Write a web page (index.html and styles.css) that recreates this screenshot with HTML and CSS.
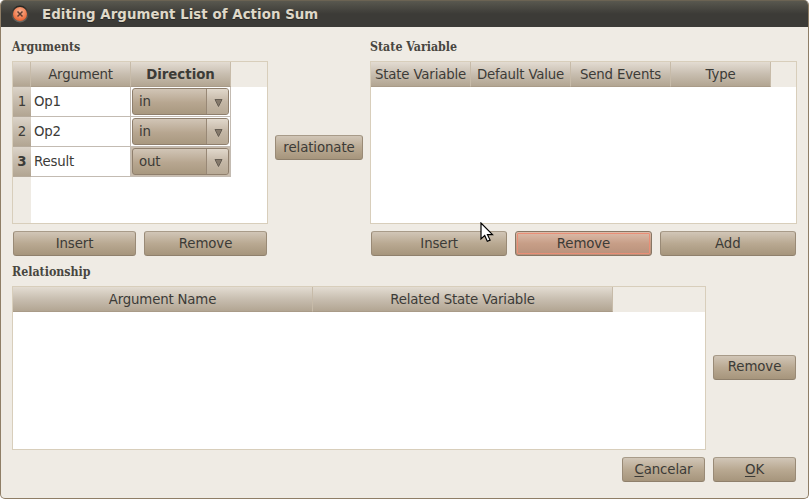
FILE: index.html
```html
<!DOCTYPE html>
<html lang="en">
<head>
<meta charset="utf-8">
<title>Editing Argument List of Action Sum</title>
<link rel="stylesheet" href="styles.css">
</head>
<body>
<div class="window">
  <header class="titlebar">
    <svg class="close" width="18" height="18" viewBox="0 0 18 18">
      <defs>
        <linearGradient id="ring" x1="0" y1="0" x2="0" y2="1"><stop offset="0" stop-color="#24231f"/><stop offset="1" stop-color="#6d6b64"/></linearGradient>
        <radialGradient id="orb" cx=".5" cy=".35" r=".65"><stop offset="0" stop-color="#f8b294"/><stop offset=".55" stop-color="#f28a60"/><stop offset="1" stop-color="#e8602e"/></radialGradient>
      </defs>
      <circle cx="9" cy="9" r="8.5" fill="url(#ring)"/>
      <circle cx="9" cy="9" r="7" fill="url(#orb)"/>
      <path d="M6.5 6.5l5 5M11.5 6.5l-5 5" stroke="#5f3d30" stroke-width="1.5"/>
    </svg>
    <h1>Editing Argument List of Action Sum</h1>
  </header>
  <main class="content">
    <section class="top">
      <div class="panel">
        <h2><span>Arguments</span></h2>
        <div class="table arguments">
          <div class="row head"><span class="num"></span><span class="col">Argument</span><span class="col strong">Direction</span></div>
          <div class="row"><span class="num">1</span><span class="cell">Op1</span><span class="cell pick"><span class="combo"><span class="value">in</span><span class="arrow"><svg width="9" height="8"><path d="M1 .5h7L4.5 7.5z" fill="#85796b" stroke="#665e54"/></svg></span></span></span></div>
          <div class="row"><span class="num">2</span><span class="cell">Op2</span><span class="cell pick"><span class="combo"><span class="value">in</span><span class="arrow"><svg width="9" height="8"><path d="M1 .5h7L4.5 7.5z" fill="#85796b" stroke="#665e54"/></svg></span></span></span></div>
          <div class="row"><span class="num strong">3</span><span class="cell">Result</span><span class="cell pick current"><span class="combo"><span class="value">out</span><span class="arrow"><svg width="9" height="8"><path d="M1 .5h7L4.5 7.5z" fill="#85796b" stroke="#665e54"/></svg></span></span></span></div>
          <div class="gutter"></div>
        </div>
        <div class="actions"><button>Insert</button><button>Remove</button></div>
      </div>
      <button class="relate">relationate</button>
      <div class="panel">
        <h2><span>State Variable</span></h2>
        <div class="table">
          <div class="row head"><span class="col">State Variable</span><span class="col">Default Value</span><span class="col">Send Events</span><span class="col">Type</span></div>
        </div>
        <div class="actions"><button>Insert</button><button class="hot">Remove</button><button>Add</button></div>
      </div>
    </section>
    <h2 class="second"><span>Relationship</span></h2>
    <section class="relationship">
      <div class="table wide">
        <div class="row head"><span class="col">Argument Name</span><span class="col">Related State Variable</span></div>
      </div>
      <button class="small">Remove</button>
    </section>
    <footer><button class="small"><u>C</u>ancelar</button><button class="small"><u>O</u>K</button></footer>
  </main>
  <svg class="cursor" width="14" height="22" viewBox="0 0 14 22"><path d="M1 1v16l3.7-3.4 2.6 5.7 2.8-1.2-2.6-5.4h5z" fill="#fff" stroke="#000" stroke-width="1.2"/></svg>
</div>
</body>
</html>
```
FILE: styles.css
```css
* { box-sizing: border-box; }
body { margin: 0; background: #fff; color: #3c3b37; font: 13.33px/16px "DejaVu Sans", sans-serif; letter-spacing: -.18px; }
.window { position: relative; width: 809px; height: 499px; overflow: hidden; border: 1px solid #8f7e66; border-top: 0; border-radius: 5px; background: #efebe4; }
.titlebar { display: flex; align-items: center; height: 27px; padding-left: 10px; gap: 13px; border-top: 1px solid #6b6353; background: linear-gradient(#59584f, #3c3b37 50%); }
.titlebar h1 { margin: 0; padding-top: 1px; font-size: 13.33px; line-height: 16px; letter-spacing: .06px; color: #dfd8c8; text-shadow: 0 1px #2a2925; white-space: nowrap; }
.content { padding: 11px 11px 0; }
.top { display: flex; height: 219px; }
.panel:first-child { width: 256px; }
.panel:last-child { width: 427px; }
h2 { height: 23px; margin: 0; padding-top: 1px; font: bold 12.3px/16px "DejaVu Serif Condensed", "DejaVu Serif", serif; font-stretch: condensed; letter-spacing: 0; color: #484640; }
h2 span { display: inline-block; white-space: nowrap; }
.table { height: 163px; border: 1px solid #d8cebb; background: #fff; }
.row { display: flex; height: 30px; }
.head { height: 25px; background: #efebe4; }
.col { display: flex; align-items: center; justify-content: center; width: 100px; padding-top: 1px; border-right: 1px solid #c7bba9; border-bottom: 1px solid #a99b88; background: linear-gradient(#e3dcd2, #c8beb0 50%, #b2a592); white-space: nowrap; }
.wide .col { width: 300px; }
.num { display: flex; align-items: center; justify-content: center; width: 18px; border-bottom: 1px solid #b5aa9b; background: linear-gradient(#dcd4c9, #c6bbac 50%, #b2a592); }
.head .num { border-right: 1px solid #c7bba9; background: linear-gradient(#e3dcd2, #c8beb0 50%, #b2a592); }
.strong { font-weight: bold; letter-spacing: 0; }
.cell { display: flex; align-items: center; width: 100px; padding: 0 0 0 3px; border-right: 1px solid #c3bbb2; border-bottom: 1px solid #c3bbb2; }
.pick { align-items: flex-start; padding: 1px; }
.current { background: #c9bdae; }
.combo { display: flex; width: 97px; height: 27px; border: 1px solid #8f7f6d; border-radius: 3px; background: linear-gradient(#d1c5b6, #b7a690 55%, #a8987f); overflow: hidden; }
.value { display: flex; align-items: center; width: 73px; padding-left: 6px; }
.arrow { display: flex; flex: 1; align-items: center; justify-content: center; padding: 3px 0 0 1px; border-left: 1px solid #988876; background: linear-gradient(#e1d8cc, #c5b8a7 50%, #b8aa96); }
.gutter { width: 18px; height: 46px; background: #efebe4; }
button { height: 25px; padding: 0; border: 1px solid #998a76; border-top-color: #a89b89; border-bottom-color: #8f806c; border-radius: 3px; background: linear-gradient(#d1c6b7, #b9a992 50%, #a6957c); color: inherit; font: inherit; letter-spacing: -.1px; }
.actions { display: flex; gap: 8px; padding: 7px 1px 0; }
.actions button { flex: 1; }
.actions .hot { border-color: #877664; outline: 1px solid #ea8e76; outline-offset: -3px; background: linear-gradient(#dcbcaa, #c79e87 50%, #b8917b); }
.relate { width: 88px; margin: 97px 7px 0; }
.second { margin-top: 6px; }
.relationship { display: flex; align-items: center; gap: 7px; height: 164px; }
.relationship .table { width: 694px; height: 164px; }
.relationship .small { margin-bottom: 2px; }
.small { width: 83px; }
footer { display: flex; justify-content: flex-end; gap: 8px; padding: 7px 1px 0 0; }
u { text-decoration: underline; text-underline-offset: 2px; text-decoration-thickness: 1px; text-decoration-skip-ink: none; }
.cursor { position: absolute; left: 479px; top: 222px; }
```
